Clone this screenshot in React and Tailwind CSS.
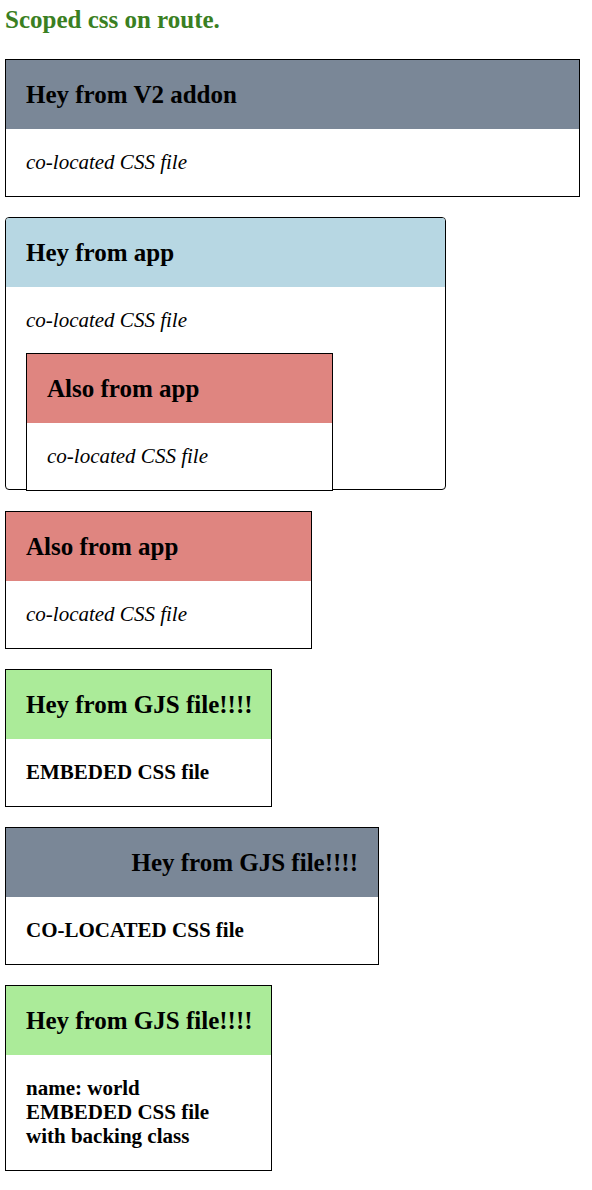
export default function App() {
  const font = { fontFamily: '"Liberation Serif", "Times New Roman", serif' };
  return (
    <div className="min-h-[1190px] bg-white px-[5px] pt-[5px] text-black" style={font}>
      <div className="mb-[25px] whitespace-nowrap text-[25px] font-bold leading-[29px] text-[#3a7f22]">Scoped css on route.</div>

      <div className="mb-[20px] w-[575px] border border-black">
        <div className="whitespace-nowrap bg-[#7a8797] px-[20px] py-[20px] text-[25px] font-bold leading-[29px]">Hey from V2 addon</div>
        <div className="px-[20px] pt-[21px] pb-[22px] text-[21px] italic leading-[24px]">co-located CSS file</div>
      </div>

      <div className="mb-[21px] w-[441px] rounded-[4px] border border-black">
        <div className="whitespace-nowrap rounded-t-[3px] bg-[#b7d7e3] px-[20px] py-[20px] text-[25px] font-bold leading-[29px]">Hey from app</div>
        <div className="px-[20px] pt-[21px]">
          <div className="text-[21px] italic leading-[24px]">co-located CSS file</div>
          <div className="relative mt-[21px] -mb-[2px] w-[307px] border border-black bg-white">
            <div className="whitespace-nowrap bg-[#df8580] px-[20px] py-[20px] text-[25px] font-bold leading-[29px]">Also from app</div>
            <div className="px-[20px] pt-[21px] pb-[22px] text-[21px] italic leading-[24px]">co-located CSS file</div>
          </div>
        </div>
      </div>

      <div className="mb-[20px] w-[307px] border border-black">
        <div className="whitespace-nowrap bg-[#df8580] px-[20px] py-[20px] text-[25px] font-bold leading-[29px]">Also from app</div>
        <div className="px-[20px] pt-[21px] pb-[22px] text-[21px] italic leading-[24px]">co-located CSS file</div>
      </div>

      <div className="mb-[20px] w-[267px] border border-black">
        <div className="whitespace-nowrap bg-[#abeb99] px-[20px] py-[20px] text-[25px] font-bold leading-[29px]">Hey from GJS file!!!!</div>
        <div className="whitespace-nowrap px-[20px] pt-[21px] pb-[22px] text-[21px] font-bold leading-[24px]">EMBEDED CSS file</div>
      </div>

      <div className="mb-[20px] w-[374px] border border-black">
        <div className="whitespace-nowrap bg-[#7a8797] px-[20px] py-[20px] text-right text-[25px] font-bold leading-[29px]">Hey from GJS file!!!!</div>
        <div className="whitespace-nowrap px-[20px] pt-[21px] pb-[22px] text-[21px] font-bold leading-[24px]">CO-LOCATED CSS file</div>
      </div>

      <div className="w-[267px] border border-black">
        <div className="whitespace-nowrap bg-[#abeb99] px-[20px] py-[20px] text-[25px] font-bold leading-[29px]">Hey from GJS file!!!!</div>
        <div className="whitespace-nowrap px-[20px] pt-[21px] pb-[22px] text-[21px] font-bold leading-[24px]">
          <div>name: world</div>
          <div>EMBEDED CSS file</div>
          <div>with backing class</div>
        </div>
      </div>
    </div>
  );
}
